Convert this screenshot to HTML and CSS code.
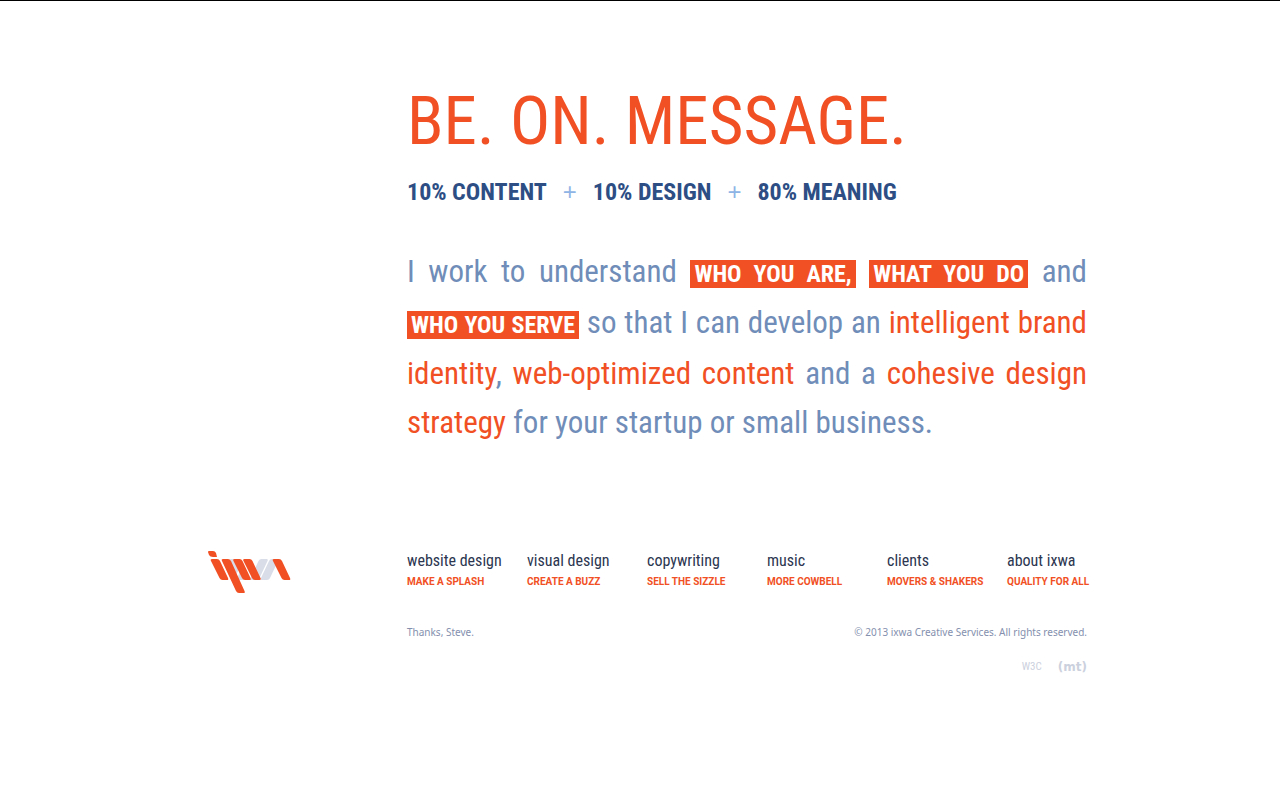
FILE: index.html
```html
<!DOCTYPE html>
<html lang="en">
<head>
<meta charset="utf-8">
<meta name="viewport" content="width=device-width, initial-scale=1">
<title>ixwa Creative Services</title>
<link rel="stylesheet" href="styles.css">
</head>
<body>
<div class="page">
  <main class="intro">
    <h1 class="headline">BE. ON. MESSAGE.</h1>
    <h2 class="formula"><span>10% CONTENT</span><span class="plus">+</span><span>10% DESIGN</span><span class="plus">+</span><span>80% MEANING</span></h2>
    <p class="pitch">
      <span class="line">I work to understand <strong>WHO YOU ARE,</strong> <strong>WHAT YOU DO</strong> and</span>
      <span class="line"><strong>WHO YOU SERVE</strong> so that I can develop an <em>intelligent brand</em></span>
      <span class="line"><em>identity</em>, <em>web-optimized content</em> and a <em>cohesive design</em></span>
      <span class="line last"><em>strategy</em> for your startup or small business.</span>
    </p>
  </main>
  <footer class="footer">
    <a class="logo" href="#" aria-label="ixwa">
      <svg width="84" height="44" viewBox="0 0 84 44">
        <g fill="#d8dde8">
          <path d="M23 9h5l4 10-4 8z"/>
          <path d="M34 17l5 10-3 3h-6z"/>
          <path d="M54.500 9h5q2 0 1 2l-8 17q-1 2-3 2h-5q-2 0-1-2l8-17q1-2 3-2z"/>
          <path d="M65 9h5q2 0 1 2l-8 17q-1 2-3 2h-5q-2 0-1-2l8-17q1-2 3-2z"/>
        </g>
        <g fill="#f15024">
          <path d="M2 1h4q2 0 3 2l1 4H6Q3 7 2 5L1 2Q1 1 2 1z"/>
          <path d="M5 9h5q2 0 3 2l8 17q1 2-1 2h-4.500q-2 0-3-2L4 11q-1-2 1-2z"/>
          <path d="M16 9h5q2 0 3 2l13.500 30q1 2-1 2H32q-2 0-3-2L15 11q-1-2 1-2z"/>
          <path d="M27.500 9h5q2 0 3 2l8 17q1 2-1 2H38q-2 0-3-2l-8.500-17q-1-2 1-2z"/>
          <path d="M37.500 9h5q2 0 3 2l8 17q1 2-1 2H48q-2 0-3-2l-8.500-17q-1-2 1-2z"/>
          <path d="M67 9h5q2 0 3 2l8 17q1 2-1 2h-4.500q-2 0-3-2L66 11q-1-2 1-2z"/>
        </g>
      </svg>
    </a>
    <div class="info">
      <nav class="nav" aria-label="Main">
        <a href="#">website design<small>MAKE A SPLASH</small></a>
        <a href="#">visual design<small>CREATE A BUZZ</small></a>
        <a href="#">copywriting<small>SELL THE SIZZLE</small></a>
        <a href="#">music<small>MORE COWBELL</small></a>
        <a href="#">clients<small>MOVERS &amp; SHAKERS</small></a>
        <a href="#">about ixwa<small>QUALITY FOR ALL</small></a>
      </nav>
      <div class="legal"><span>Thanks, Steve.</span><span>© 2013 ixwa Creative Services. All rights reserved.</span></div>
      <div class="badges"><a class="w3c" href="#">W3C</a><a class="mt" href="#">(mt)</a></div>
    </div>
  </footer>
</div>
</body>
</html>
```
FILE: styles.css
```css
* { box-sizing: border-box; }
body {
  margin: 0;
  border-top: 1px solid #000;
  background: #fff;
  font-family: "Roboto Condensed", "Liberation Sans Narrow", "Liberation Sans", sans-serif;
}
a { color: inherit; text-decoration: none; }
.page {
  max-width: 894px;
  margin: 0 auto;
  padding: 80px 0 40px 14px;
}
.intro { margin-left: 200px; }
.headline {
  margin: 0;
  font-size: 67px;
  line-height: 80px;
  font-weight: 400;
  color: #f15024;
  white-space: nowrap;
}
.formula {
  display: flex;
  gap: 16px;
  margin: 15px 0 0;
  font-size: 24px;
  line-height: 32px;
  font-weight: 700;
  color: #2d4e85;
  white-space: nowrap;
}
.plus {
  font-family: "Liberation Sans", sans-serif;
  font-weight: 400;
  color: #8eb4e6;
}
.pitch {
  margin: 38px 0 0;
  font-size: 31px;
  line-height: 51px;
  color: #6f8db8;
}
.line {
  display: block;
  white-space: nowrap;
  text-align-last: justify;
}
.line.last { text-align-last: left; line-height: 48px; }
.pitch em { font-style: normal; color: #f15024; }
.pitch strong {
  padding: 0 4px;
  background: #f15024;
  color: #fff;
  font-size: 24px;
  line-height: 1;
}
.footer {
  display: flex;
  margin-top: 103px;
}
.logo { flex: 0 0 200px; }
.logo svg { display: block; }
.info { flex: 1; min-width: 0; }
.nav {
  display: grid;
  grid-template-columns: repeat(5, 120px) auto;
  font-size: 16px;
  line-height: 21px;
  color: #2c3650;
  white-space: nowrap;
}
.nav small {
  display: block;
  font-family: Roboto, sans-serif;
  font-size: 10px;
  font-weight: 700;
  color: #f15024;
}
.legal {
  display: flex;
  justify-content: space-between;
  margin-top: 32px;
  font-family: "Noto Sans", sans-serif;
  font-size: 10px;
  line-height: 16px;
  color: #8490ae;
}
.badges {
  display: flex;
  justify-content: flex-end;
  gap: 16px;
  margin-top: 19px;
  font-size: 11px;
  line-height: 16px;
  color: #ccd1de;
}
.mt {
  font-family: "DejaVu Sans", sans-serif;
  font-size: 12px;
  font-weight: 700;
}
```
